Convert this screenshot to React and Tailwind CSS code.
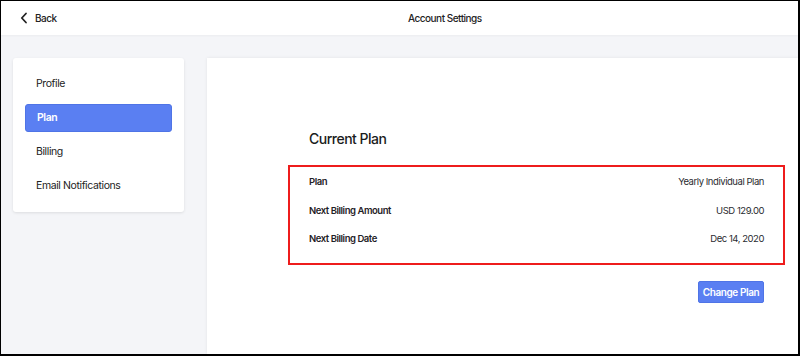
import React, { useState } from 'react';

const navItems = [
    { id: 'profile', label: 'Profile' },
    { id: 'plan', label: 'Plan' },
    { id: 'billing', label: 'Billing' },
    { id: 'email', label: 'Email Notifications' }
];

const planRows = [
    { label: 'Plan', value: 'Yearly Individual Plan' },
    { label: 'Next Billing Amount', value: 'USD 129.00' },
    { label: 'Next Billing Date', value: 'Dec 14, 2020' }
];

const App = () => {
    const [active, setActive] = useState('plan');

    return (
        <div className="w-[800px] h-[356px] overflow-hidden border-l border-t border-r-2 border-b-2 border-black flex flex-col bg-[#f4f5f8] text-[#1f2126]" style={{ fontFamily: 'Inter, "Noto Sans", sans-serif' }}>
            {/* top bar */}
            <div className="h-[34px] shrink-0 bg-white flex items-center shadow-[0_1px_2px_rgba(0,0,0,0.04)]">
                <button type="button" className="w-[387px] flex items-center gap-[7px] pl-[19px] text-[10px] tracking-[-0.5px] font-medium text-[#222]">
                    <svg width="8" height="12" viewBox="0 0 8 12" fill="none" stroke="#222" strokeWidth="1.8" strokeLinecap="round" strokeLinejoin="round">
                        <path d="M6 1.5L1.8 6L6 10.5" />
                    </svg>
                    Back
                </button>
                <div className="ml-[20px] text-[10px] tracking-[-0.5px] font-medium text-[#222]">
                    Account Settings
                </div>
            </div>

            <div className="flex-1 flex pt-[23px] pl-[12px] gap-[23px]">
                {/* sidebar */}
                <div className="w-[171px] self-start bg-white rounded-[3px] shadow-[0_1px_3px_rgba(0,0,0,0.1)] p-3 flex flex-col gap-[6px]">
                    {navItems.map(item => (
                        <button
                            key={item.id}
                            type="button"
                            onClick={() => setActive(item.id)}
                            className={
                                active === item.id
                                    ? 'h-[28px] rounded-[3px] bg-[#5a7ff2] text-white font-semibold text-[10.5px] tracking-[-0.4px] text-left pl-[11px] border border-[#4f74e6]'
                                    : 'h-[28px] rounded-[3px] text-[#222] text-[10.5px] tracking-[-0.4px] text-left pl-[11px]'
                            }
                        >
                            {item.label}
                        </button>
                    ))}
                </div>

                {/* main panel */}
                <div className="flex-1 bg-white shadow-[0_0_3px_rgba(0,0,0,0.08)] pt-[70px] pl-[81px] pr-[13px]">
                    <h2 className="pl-[21px] text-[14px] tracking-[-0.5px] font-medium text-[#1a1c20] leading-[22px]">Current Plan</h2>

                    <div className="mt-[15px] h-[100px] border-2 border-[#ee1c1c] px-[19px] pt-[1px] flex flex-col">
                        {planRows.map(row => (
                            <div key={row.label} className="h-[28.5px] flex items-center justify-between text-[9.5px] tracking-[-0.45px]">
                                <span className="font-semibold text-[#1f2126]">{row.label}</span>
                                <span className="text-[#2a2c30]">{row.value}</span>
                            </div>
                        ))}
                    </div>

                    <div className="flex justify-end pr-[21px] mt-[16px]">
                        <button type="button" className="h-[22px] w-[66px] whitespace-nowrap rounded-[2px] bg-[#5a7ff2] border border-[#4f74e6] text-white text-[10px] tracking-[-0.4px] font-semibold">
                            Change Plan
                        </button>
                    </div>
                </div>
            </div>
        </div>
    );
};

export default App;
